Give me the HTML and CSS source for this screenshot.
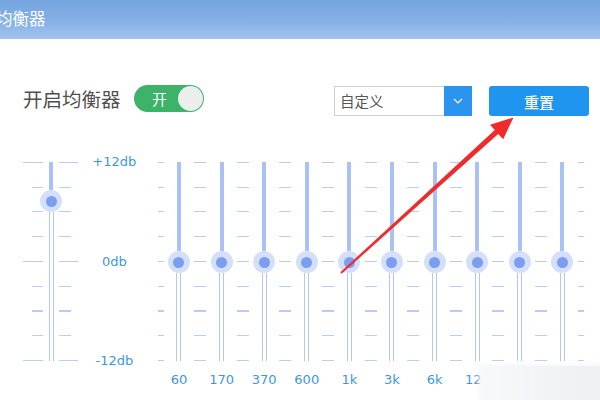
FILE: index.html
```html
<!DOCTYPE html>
<html lang="zh-CN">
<head>
<meta charset="utf-8">
<title>均衡器</title>
<link rel="stylesheet" href="styles.css">
</head>
<body>
<div class="page">
  <header class="titlebar"><span class="title">均衡器</span></header>

  <div class="controls">
    <span class="switch-label">开启均衡器</span>
    <span class="toggle"><span class="toggle-text">开</span><span class="knob"></span></span>
    <span class="spacer"></span>
    <div class="select">
      <span class="select-text">自定义</span>
      <span class="select-arrow">
        <svg width="10" height="6" viewBox="0 0 10 6"><polyline points="1,1 5,5 9,1" fill="none" stroke="#fff" stroke-width="1.2"/></svg>
      </span>
    </div>
    <button class="reset">重置</button>
  </div>

  <div class="eq">
    <div class="preamp">
      <div class="track-wrap">
        <div class="fill" style="height:28px"></div>
        <div class="thumb"><span class="dot"></span></div>
        <div class="rest"></div>
      </div>
    </div>
    <div class="scale">
      <span>+12db</span>
      <span>0db</span>
      <span>-12db</span>
    </div>
    <div class="bands">
      <div class="band"><div class="ticks"><div class="track-wrap"><div class="fill" style="height:89px"></div><div class="thumb"><span class="dot"></span></div><div class="rest"></div></div></div><span class="freq">60</span></div>
      <div class="band"><div class="ticks"><div class="track-wrap"><div class="fill" style="height:89px"></div><div class="thumb"><span class="dot"></span></div><div class="rest"></div></div></div><span class="freq">170</span></div>
      <div class="band"><div class="ticks"><div class="track-wrap"><div class="fill" style="height:89px"></div><div class="thumb"><span class="dot"></span></div><div class="rest"></div></div></div><span class="freq">370</span></div>
      <div class="band"><div class="ticks"><div class="track-wrap"><div class="fill" style="height:89px"></div><div class="thumb"><span class="dot"></span></div><div class="rest"></div></div></div><span class="freq">600</span></div>
      <div class="band"><div class="ticks"><div class="track-wrap"><div class="fill" style="height:89px"></div><div class="thumb"><span class="dot"></span></div><div class="rest"></div></div></div><span class="freq">1k</span></div>
      <div class="band"><div class="ticks"><div class="track-wrap"><div class="fill" style="height:89px"></div><div class="thumb"><span class="dot"></span></div><div class="rest"></div></div></div><span class="freq">3k</span></div>
      <div class="band"><div class="ticks"><div class="track-wrap"><div class="fill" style="height:89px"></div><div class="thumb"><span class="dot"></span></div><div class="rest"></div></div></div><span class="freq">6k</span></div>
      <div class="band"><div class="ticks"><div class="track-wrap"><div class="fill" style="height:89px"></div><div class="thumb"><span class="dot"></span></div><div class="rest"></div></div></div><span class="freq">12k</span></div>
      <div class="band"><div class="ticks"><div class="track-wrap"><div class="fill" style="height:89px"></div><div class="thumb"><span class="dot"></span></div><div class="rest"></div></div></div><span class="freq">14k</span></div>
      <div class="band"><div class="ticks"><div class="track-wrap"><div class="fill" style="height:89px"></div><div class="thumb"><span class="dot"></span></div><div class="rest"></div></div></div><span class="freq">16k</span></div>
    </div>
  </div>

  <div class="fade"></div>

  <svg class="arrow" width="600" height="400" viewBox="0 0 600 400">
    <polygon points="340.4,272.2 494.8,130.1 490,124.8 513.5,117.5 503.2,139.2 498.2,133.9 341.6,273.8" fill="#ef2b2b"/>
  </svg>
</div>
</body>
</html>
```

FILE: styles.css
```css
* { box-sizing: border-box; }

html, body {
  margin: 0;
  padding: 0;
  background: #fff;
}

.page {
  position: relative;
  width: 600px;
  height: 400px;
  overflow: hidden;
  font-family: "Noto Sans CJK SC", "DejaVu Sans", sans-serif;
}

.titlebar {
  height: 39px;
  background: linear-gradient(180deg, #74a3df 0%, #86b1e6 55%, #a1c4ee 100%);
  display: flex;
  align-items: center;
}

.title {
  margin-left: -4px;
  margin-top: -4px;
  color: #fff;
  font-size: 16.5px;
  line-height: 20px;
}

.controls {
  display: flex;
  align-items: flex-start;
  margin-top: 46px;
  padding: 0 11px 0 23px;
  height: 31px;
}

.switch-label {
  font-size: 19.5px;
  line-height: 28px;
  color: #505050;
  width: 100px;
  white-space: nowrap;
}

.toggle {
  margin-left: 11px;
  width: 70px;
  height: 27px;
  border-radius: 14px;
  background: #3db36a;
  display: flex;
  align-items: center;
  justify-content: space-between;
  padding: 0 1px 0 18px;
}

.toggle-text {
  color: #fff;
  font-size: 15px;
  line-height: 20px;
}

.knob {
  width: 25px;
  height: 25px;
  border-radius: 50%;
  background: #ebeeec;
}

.spacer { flex: 1; }

.select {
  margin-top: 1px;
  width: 138px;
  height: 30px;
  border: 1px solid #cfcfcf;
  display: flex;
  align-items: stretch;
}

.select-text {
  flex: 1;
  padding-left: 5px;
  font-size: 14.5px;
  line-height: 28px;
  color: #555;
}

.select-arrow {
  width: 28px;
  margin: -1px -1px -1px 0;
  background: #2b94ee;
  display: flex;
  align-items: center;
  justify-content: center;
}

.reset {
  margin-top: 1px;
  margin-left: 17px;
  width: 100px;
  height: 30px;
  border: none;
  border-radius: 3px;
  background: #1f95ef;
  color: #fff;
  font-family: "Noto Sans CJK SC", sans-serif;
  font-size: 15px;
  font-weight: 500;
  padding: 0;
}

/* equalizer */
.eq {
  display: flex;
  margin-top: 46px;
  padding-left: 23px;
}

.preamp {
  width: 55px;
  height: 199px;
  display: flex;
  justify-content: center;
  background:
    repeating-linear-gradient(180deg, #bccbf1 0 1px, transparent 1px 24.75px) 9px 0 / 11px 100% no-repeat,
    repeating-linear-gradient(180deg, #bccbf1 0 1px, transparent 1px 99px) 0 0 / 20px 100% no-repeat,
    repeating-linear-gradient(180deg, #bccbf1 0 1px, transparent 1px 24.75px) 36px 0 / 12px 100% no-repeat,
    repeating-linear-gradient(180deg, #bccbf1 0 1px, transparent 1px 99px) 36px 0 / 19px 100% no-repeat;
}

.preamp .track-wrap { margin-left: 1px; }

.scale {
  width: 79.7px;
  height: 215px;
  margin-top: -8px;
  padding-right: 7px;
  display: flex;
  flex-direction: column;
  justify-content: space-between;
  align-items: center;
  font-family: "DejaVu Sans", sans-serif;
  font-size: 13px;
  line-height: 16px;
  color: #3e97de;
}

.bands {
  display: flex;
}

.band {
  width: 42.6px;
  display: flex;
  flex-direction: column;
  align-items: center;
}

.ticks {
  width: 100%;
  height: 199px;
  display: flex;
  justify-content: center;
  background:
    repeating-linear-gradient(180deg, #bccbf1 0 1px, transparent 1px 24.75px) 0 0 / 6px 100% no-repeat,
    repeating-linear-gradient(180deg, #bccbf1 0 1px, transparent 1px 24.75px) 100% 0 / 6px 100% no-repeat;
}

.track-wrap {
  width: 22px;
  height: 199px;
  display: flex;
  flex-direction: column;
  align-items: center;
}

.fill {
  width: 4px;
  background: #a9c1f5;
  flex: none;
}

.thumb {
  flex: none;
  width: 22px;
  height: 22px;
  border-radius: 50%;
  background: #d4dffa;
  display: flex;
  align-items: center;
  justify-content: center;
}

.dot {
  width: 11px;
  height: 11px;
  border-radius: 50%;
  background: #7b9ef1;
}

.rest {
  flex: 1;
  width: 5px;
  border-left: 1.5px solid #b3c7f5;
  border-right: 1.5px solid #b3c7f5;
}

.freq {
  margin-top: 11px;
  font-family: "DejaVu Sans", sans-serif;
  font-size: 13px;
  line-height: 16px;
  color: #3e97de;
  white-space: nowrap;
}

.fade {
  position: absolute;
  left: 481px;
  top: 366px;
  width: 119px;
  height: 34px;
  background: linear-gradient(90deg, #f8f9fb 0%, #f1f3f6 60%, #eef1f4 100%);
  box-shadow: 0 0 4px 2px #f6f7f9;
}

.arrow {
  position: absolute;
  left: 0;
  top: 0;
  pointer-events: none;
}
```
